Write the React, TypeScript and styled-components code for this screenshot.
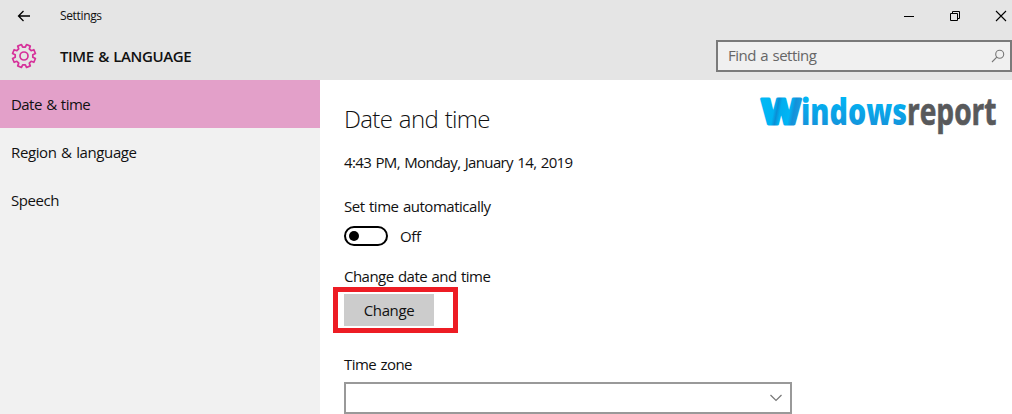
import React from "react";
import styled, { createGlobalStyle } from "styled-components";

const GlobalStyle = createGlobalStyle`
  * { box-sizing: border-box; }
  body {
    margin: 0;
    overflow: hidden;
    background: #fff;
    color: #111;
    font-family: "Open Sans", "Noto Sans", sans-serif;
    word-spacing: 1px;
  }
`;

const Window = styled.div`
  width: 1012px;
  height: 414px;
  display: flex;
  flex-direction: column;
  overflow: hidden;
`;

const TitleBar = styled.header`
  flex: none;
  height: 32px;
  display: flex;
  align-items: center;
  background: #e5e5e5;
  padding-left: 17px;
`;

const TitleText = styled.span`
  margin-left: 29px;
  font-size: 12px;
  letter-spacing: -0.35px;
  line-height: 32px;
`;

const Controls = styled.div`
  margin-left: auto;
  display: flex;
  gap: 32px;
  padding-right: 4px;
`;

const Header = styled.div`
  flex: none;
  height: 48px;
  display: flex;
  align-items: center;
  background: #e5e5e5;
  padding-left: 11px;
`;

const Heading = styled.h1`
  margin: 0 0 0 23px;
  font-size: 15px;
  font-weight: 600;
  letter-spacing: -0.4px;
  line-height: 48px;
`;

const Search = styled.div`
  margin-left: auto;
  width: 296px;
  height: 32px;
  display: flex;
  align-items: center;
  justify-content: space-between;
  padding: 0 5px 0 10px;
  border: 2px solid #7a7a7a;
  background: #f0f0f0;
  color: #666;
  font-size: 15px;
  line-height: 26px;
  letter-spacing: -0.5px;
`;

const SearchLabel = styled.span`
  padding-bottom: 2px;
`;

const Body = styled.div`
  flex: 1;
  display: flex;
  min-height: 0;
`;

const Sidebar = styled.nav`
  flex: none;
  width: 320px;
  background: #f1f1f1;
`;

const NavItem = styled.div<{ $active?: boolean; $spacing: number }>`
  height: 48px;
  padding-left: 11px;
  line-height: 49px;
  font-size: 15px;
  letter-spacing: ${(p) => p.$spacing}px;
  background: ${(p) => (p.$active ? "#e3a0c9" : "transparent")};
`;

const Main = styled.main`
  flex: 1;
  display: flex;
  justify-content: space-between;
  align-items: flex-start;
  padding: 0 12px 0 24px;
`;

const Content = styled.section`
  width: 416px;
  padding-top: 22px;
  white-space: nowrap;
`;

const Title = styled.h2`
  margin: 0;
  font-size: 24px;
  font-weight: 350;
  letter-spacing: -0.65px;
  line-height: 34px;
`;

const Line = styled.div<{ $top: number; $spacing: number }>`
  margin-top: ${(p) => p.$top}px;
  padding-bottom: 2px;
  font-size: 15px;
  line-height: 18px;
  letter-spacing: ${(p) => p.$spacing}px;
`;

const ToggleRow = styled.div`
  display: flex;
  align-items: center;
  gap: 12px;
  height: 20px;
  margin-top: 9px;
  font-size: 15px;
  letter-spacing: -0.4px;
`;

const Toggle = styled.div`
  width: 44px;
  height: 20px;
  border: 2px solid #000;
  border-radius: 10px;
  padding: 3px;
`;

const Knob = styled.div`
  width: 10px;
  height: 10px;
  border-radius: 50%;
  background: #000;
`;

const ButtonArea = styled.div`
  position: relative;
  width: 90px;
  height: 32px;
  margin-top: 7px;
`;

const Button = styled.button`
  width: 90px;
  height: 32px;
  padding: 1px 0 0;
  border: 0;
  background: #ccc;
  color: #111;
  font: 15px/31px "Open Sans", sans-serif;
  letter-spacing: -0.4px;
`;

const Highlight = styled.div`
  position: absolute;
  left: -11px;
  top: -7px;
  width: 125px;
  height: 46px;
  border: 5px solid #ed1c24;
`;

const Select = styled.div`
  width: 448px;
  height: 32px;
  margin-top: 7px;
  padding-right: 8px;
  display: flex;
  align-items: center;
  justify-content: flex-end;
  border: 2px solid #999;
`;

const Logo = styled.svg`
  flex: none;
  margin-top: 6px;
  overflow: visible;
  word-spacing: 0;
`;

const gearPath = (() => {
  const pts: string[] = [];
  const point = (r: number, deg: number) => {
    const a = (deg * Math.PI) / 180;
    return `${(13 + r * Math.cos(a)).toFixed(2)} ${(13 + r * Math.sin(a)).toFixed(2)}`;
  };
  for (let i = 0; i < 8; i++) {
    const c = i * 45 + 22.5;
    pts.push(point(8.9, c - 14), point(11.7, c - 10), point(11.7, c + 10), point(8.9, c + 14));
  }
  return `M${pts.join("L")}Z`;
})();

export default function App() {
  return (
    <Window>
      <GlobalStyle />
      <TitleBar>
        <svg width="14" height="12" viewBox="0 0 14 12" fill="none" stroke="#000" strokeWidth="1.3">
          <path d="M13 6H1.5M6.5 1L1.5 6l5 5" />
        </svg>
        <TitleText>Settings</TitleText>
        <Controls>
          <svg width="14" height="14" stroke="#000" fill="none">
            <path d="M2 7.5h10" />
          </svg>
          <svg width="14" height="14" stroke="#000" fill="none">
            <path d="M2.5 4.5h7v7h-7zM4.5 4.5v-2h7v7h-2" />
          </svg>
          <svg width="14" height="14" stroke="#000" strokeWidth="1.1" fill="none">
            <path d="M2 2l10 10M12 2L2 12" />
          </svg>
        </Controls>
      </TitleBar>
      <Header>
        <svg width="26" height="26" fill="none" stroke="#d6319a" strokeWidth="1.7" strokeLinejoin="round">
          <path d={gearPath} />
          <circle cx="13" cy="13" r="4" />
        </svg>
        <Heading>TIME &amp; LANGUAGE</Heading>
        <Search>
          <SearchLabel>Find a setting</SearchLabel>
          <svg width="14" height="14" fill="none" stroke="#777" strokeWidth="1.1">
            <circle cx="8.7" cy="5.3" r="4" />
            <path d="M5.8 8.2L1 13" />
          </svg>
        </Search>
      </Header>
      <Body>
        <Sidebar>
          <NavItem $active $spacing={-0.55}>Date &amp; time</NavItem>
          <NavItem $spacing={-0.38}>Region &amp; language</NavItem>
          <NavItem $spacing={-0.45}>Speech</NavItem>
        </Sidebar>
        <Main>
          <Content>
            <Title>Date and time</Title>
            <Line $top={17} $spacing={-0.63}>4:43 PM, Monday, January 14, 2019</Line>
            <Line $top={24} $spacing={-0.48}>Set time automatically</Line>
            <ToggleRow>
              <Toggle><Knob /></Toggle>
              <span>Off</span>
            </ToggleRow>
            <Line $top={21} $spacing={-0.53}>Change date and time</Line>
            <ButtonArea>
              <Button>Change</Button>
              <Highlight />
            </ButtonArea>
            <Line $top={29} $spacing={-0.55}>Time zone</Line>
            <Select>
              <svg width="12" height="8" fill="none" stroke="#777" strokeWidth="1.2">
                <path d="M0.5 1L6 6.5L11.5 1" />
              </svg>
            </Select>
          </Content>
          <Logo width="240" height="56">
            <defs>
              <linearGradient id="blue" x1="0" y1="0" x2="0" y2="1">
                <stop offset="0.25" stopColor="#00b5f5" />
                <stop offset="0.8" stopColor="#1495dc" />
              </linearGradient>
              <linearGradient id="ribbon" gradientUnits="userSpaceOnUse" x1="0" y1="20" x2="41" y2="28">
                <stop offset="0" stopColor="#00b9f5" />
                <stop offset="0.34" stopColor="#00b3f2" />
                <stop offset="0.42" stopColor="#0b8dd4" />
                <stop offset="0.5" stopColor="#00aeef" />
                <stop offset="0.72" stopColor="#00b5f5" />
                <stop offset="0.82" stopColor="#1490d8" />
                <stop offset="1" stopColor="#1ba0e4" />
              </linearGradient>
            </defs>
            <g fontFamily="Open Sans" fontSize="37.5" strokeLinejoin="round">
              <text x="1" y="37.5" fontWeight="800" fontSize="35" fill="url(#ribbon)" stroke="url(#ribbon)" strokeWidth="3" textLength="40" lengthAdjust="spacingAndGlyphs">W</text>
              <text x="41" y="38.5" fontWeight="800" fill="url(#blue)" textLength="106" lengthAdjust="spacingAndGlyphs">indows</text>
              <text x="147" y="38.5" fontWeight="700" fill="#58595b" stroke="#58595b" strokeWidth="0.7" textLength="89.5" lengthAdjust="spacingAndGlyphs">report</text>
            </g>
          </Logo>
        </Main>
      </Body>
    </Window>
  );
}
